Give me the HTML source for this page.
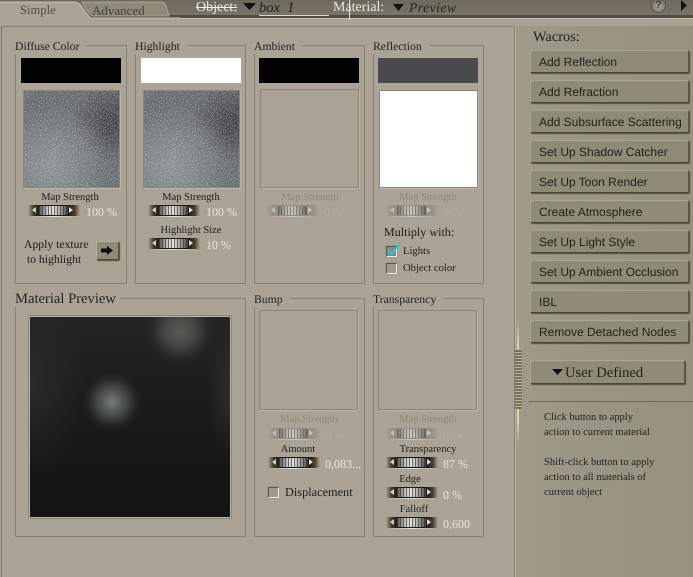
<!DOCTYPE html>
<html><head><meta charset="utf-8">
<style>
html,body{margin:0;padding:0}
body{width:693px;height:577px;overflow:hidden;position:relative;background:#aaa396;font-family:"Liberation Serif",serif;color:#1c1b18;text-rendering:geometricPrecision}
div,span{position:absolute;box-sizing:border-box;white-space:nowrap}
.g{border:1px solid #85806f;border-radius:1px}
.lb{background:#aaa396;padding:0 7px 0 0;font-size:11.7px;line-height:14px;color:#24231f}
.sw{width:100px;height:25px}
.well{border:1px solid #8b8676;box-shadow:1px 1px 0 #bdb7aa}
.c{text-align:center;font-size:10.5px;line-height:12px;color:#1f1e1a}
.dis{color:#8f8a7c}
.v{font-size:12px;line-height:14px;color:#e9e6de}
.vd{color:#b5afa3}
.sl{width:44px;height:14px}
.sl i{position:absolute;display:block}
.sl .bg{left:-4px;top:1px;width:52px;height:11px;background:linear-gradient(90deg,transparent,#4a3f2d 10%,#1c1812 22%,#1c1812 78%,#4a3f2d 90%,transparent)}
.sl .bar{left:7px;top:2px;width:29px;height:9px;background:repeating-linear-gradient(90deg,rgba(40,40,40,.6) 0 1px,transparent 1px 3px),linear-gradient(90deg,#55524b,#c8c8c6 30%,#e0e0de 50%,#a0a09c 75%,#44423c)}
.sl .la{left:0;top:3px;border:3.5px solid transparent;border-right:4px solid #d0d0cb;border-left:0}
.sl .ra{left:37px;top:3px;border:3.5px solid transparent;border-left:4px solid #dcdcd6;border-right:0}
.sl .ln{left:-3px;top:12px;width:50px;height:1px;background:linear-gradient(90deg,transparent,#e6e2d6,transparent)}
.sl.d{opacity:.6}
.sl.d .bg{opacity:.25}
.btn{left:530px;width:159px;height:23px;background:#8f8b78;border:1px solid #aaa695;border-right-color:#5b5748;border-bottom-color:#4a4739;border-radius:2px;box-shadow:1px 1px 1px #4f4c40;font-family:"Liberation Sans",sans-serif;font-size:12px;line-height:23px;padding-left:8px;color:#22211c}
.note{left:544px;font-size:10.5px;line-height:15px;color:#24231e}
.ck{width:11px;height:11px;border:1px solid #efece4;border-top-color:#5a574d;border-left-color:#5a574d;box-shadow:0 0 1px #77725f}
.tex{left:0;top:0;width:96px;height:96px;background:radial-gradient(circle 62px at 28% 78%,#92979c 0,#82878c 40%,rgba(105,110,114,0) 100%),radial-gradient(ellipse 50px 40px at 100% 32%,#3d4042 0,#4a4d50 40%,rgba(95,99,103,0) 100%),#676c70}
</style></head><body>
<svg width="0" height="0" style="position:absolute"><defs>
<filter id="n" x="0" y="0" width="100%" height="100%"><feTurbulence type="fractalNoise" baseFrequency="1.1" numOctaves="2" seed="4"/><feColorMatrix values="0 0 0 0 .85  0 0 0 0 .87  0 0 0 0 .92  3.4 0 0 0 -1.95"/></filter>
<filter id="n2" x="0" y="0" width="100%" height="100%"><feTurbulence type="fractalNoise" baseFrequency=".9" numOctaves="2" seed="9"/><feColorMatrix values="0 0 0 0 .2  0 0 0 0 .21  0 0 0 0 .22  2 0 0 0 -1"/></filter>
</defs></svg>

<!-- right column -->
<div style="left:515px;top:20px;width:178px;height:557px;background:linear-gradient(90deg,#a09a8b,#9b9586 40%,#979180)"></div>
<div style="left:515px;top:19px;width:1px;height:558px;background:#b9b4a7"></div>

<!-- top bar -->
<div style="left:0;top:0;width:693px;height:16px;background:linear-gradient(#6d675c,#7b7568)"></div>
<div style="left:0;top:15px;width:693px;height:3px;background:#4f4b41"></div>
<div style="left:0;top:18px;width:693px;height:1px;background:#c9c4b7"></div>
<div style="left:0;top:19px;width:693px;height:7px;background:#aaa396"></div>

<!-- tabs -->
<svg style="position:absolute;left:0;top:0" width="180" height="22">
<path d="M82 2H161Q165 2 166 6L169 16H92Q86 10 82 2Z" fill="#8f897a" stroke="#a9a496"/>
<path d="M0 20V2H74Q79 2 82 7Q86 14 91 18H180V20Z" fill="#aaa396"/>
<path d="M0 2H74Q79 2 82 7Q86 14 91 18H180" fill="none" stroke="#c9c4b7"/>
</svg>
<div style="left:20px;top:3px;font-size:12.6px;line-height:15px;color:#4d4a41">Simple</div>
<div style="left:92px;top:3px;font-size:13px;line-height:15px;color:#45423a">Advanced</div>

<!-- object/material -->
<div style="left:196px;top:0;font-size:14px;line-height:16px;color:#f2f0ea;text-decoration:line-through">Object:</div>
<svg style="position:absolute;left:243px;top:3px" width="14" height="8"><path d="M0 0H13L6.5 7Z" fill="#111"/></svg>
<div style="left:259px;top:0;font-size:14.5px;line-height:16px;font-style:italic;color:#1e1d19">box&nbsp;&nbsp;1</div>
<div style="left:259px;top:15px;width:70px;height:1px;background:#d8d4c9"></div>
<div style="left:333px;top:0;font-size:14px;line-height:16px;color:#e9e6df">Material:</div>
<div style="left:349px;top:0;width:1px;height:20px;background:#e8e5dd"></div>
<svg style="position:absolute;left:393px;top:4px" width="12" height="8"><path d="M0 0H11L5.5 7Z" fill="#111"/></svg>
<div style="left:409px;top:0;font-size:13.5px;line-height:16px;font-style:italic;color:#25241f;letter-spacing:.55px">Preview</div>
<div style="left:651px;top:-2px;width:15px;height:15px;border-radius:50%;background:radial-gradient(circle at 50% 60%,#a8a499,#6a665b);border:1px solid #55514a;color:#3b3932;font:bold 11px/13px 'Liberation Sans',sans-serif;text-align:center">?</div>
<svg style="position:absolute;left:681px;top:0" width="8" height="12"><path d="M0 0L6 5.5L0 11Z" fill="#111"/></svg>

<!-- main frame -->
<div style="left:1px;top:26px;width:514px;height:551px;border-left:1px solid #797466;border-top:1px solid #857f70;border-right:1px solid #857f70"></div>

<!-- Diffuse -->
<div class="g" style="left:15px;top:45px;width:112px;height:239px"></div>
<div class="lb" style="left:15px;top:40px">Diffuse Color</div>
<div class="sw" style="left:21px;top:58px;background:#020202"></div>
<div class="well" style="left:23px;top:90px;width:97px;height:98px;overflow:hidden">
 <div class="tex"></div>
 <svg style="position:absolute;left:0;top:0" width="96" height="96"><rect width="96" height="96" filter="url(#n2)"/><rect width="96" height="96" filter="url(#n)"/></svg>
</div>
<div class="c" style="left:20px;top:192px;width:100px">Map Strength</div>
<div class="sl" style="left:32px;top:204px"><i class="bg"></i><i class="bar"></i><i class="la"></i><i class="ra"></i><i class="ln"></i></div>
<div class="v" style="left:86px;top:205px">100 %</div>
<div style="left:24px;top:237px;font-size:11.7px;line-height:15px">Apply texture<br>&nbsp;to highlight</div>
<div style="left:96px;top:241px;width:23px;height:19px;background:#8f8b78;border:1px solid #b5b1a1;border-right-color:#55523f;border-bottom-color:#4a4739;border-radius:2px;box-shadow:1px 1px 1px #4f4c40"></div>
<svg style="position:absolute;left:100px;top:245px" width="14" height="11"><path d="M1 3.5H7V1L13 5.5L7 10V7.5H1Z" fill="#0c0c0c"/></svg>

<!-- Highlight -->
<div class="g" style="left:135px;top:45px;width:111px;height:239px"></div>
<div class="lb" style="left:135px;top:40px">Highlight</div>
<div class="sw" style="left:141px;top:58px;background:#fff"></div>
<div class="well" style="left:143px;top:90px;width:97px;height:98px;overflow:hidden">
 <div class="tex"></div>
 <svg style="position:absolute;left:0;top:0" width="96" height="96"><rect width="96" height="96" filter="url(#n2)"/><rect width="96" height="96" filter="url(#n)"/></svg>
</div>
<div class="c" style="left:141px;top:192px;width:100px">Map Strength</div>
<div class="sl" style="left:152px;top:204px"><i class="bg"></i><i class="bar"></i><i class="la"></i><i class="ra"></i><i class="ln"></i></div>
<div class="v" style="left:206px;top:205px">100 %</div>
<div class="c" style="left:141px;top:225px;width:100px">Highlight Size</div>
<div class="sl" style="left:152px;top:237px"><i class="bg"></i><i class="bar"></i><i class="la"></i><i class="ra"></i><i class="ln"></i></div>
<div class="v" style="left:206px;top:238px">10 %</div>

<!-- Ambient -->
<div class="g" style="left:254px;top:45px;width:111px;height:239px"></div>
<div class="lb" style="left:254px;top:40px">Ambient</div>
<div class="sw" style="left:259px;top:58px;background:#020202"></div>
<div class="well" style="left:260px;top:89px;width:99px;height:99px"></div>
<div class="c dis" style="left:260px;top:192px;width:100px">Map Strength</div>
<div class="sl d" style="left:271px;top:204px"><i class="bg"></i><i class="bar"></i><i class="la"></i><i class="ra"></i><i class="ln"></i></div>
<div class="v vd" style="left:324px;top:205px">0 %</div>

<!-- Reflection -->
<div class="g" style="left:373px;top:45px;width:111px;height:239px"></div>
<div class="lb" style="left:373px;top:40px">Reflection</div>
<div class="sw" style="left:378px;top:58px;background:#4a4a4c"></div>
<div class="well" style="left:379px;top:90px;width:99px;height:98px;background:#fff"></div>
<div class="c dis" style="left:378px;top:192px;width:100px">Map Strength</div>
<div class="sl d" style="left:390px;top:204px"><i class="bg"></i><i class="bar"></i><i class="la"></i><i class="ra"></i><i class="ln"></i></div>
<div class="v vd" style="left:443px;top:205px">0 %</div>
<div style="left:384px;top:225px;font-size:12.1px;line-height:14px">Multiply with:</div>
<div class="ck" style="left:386px;top:246px;background:#8d8777"></div>
<svg style="position:absolute;left:386px;top:242px" width="16" height="16"><path d="M2 8L6 12L14 1" fill="none" stroke="#18cfe6" stroke-width="2"/></svg>
<div class="c" style="left:403px;top:246px;font-size:10.6px">Lights</div>
<div class="ck" style="left:386px;top:263px;background:#a09a8b"></div>
<div class="c" style="left:403px;top:263px;font-size:10.6px">Object color</div>

<!-- Material Preview -->
<div class="g" style="left:15px;top:298px;width:231px;height:239px"></div>
<div class="lb" style="left:15px;top:291px;font-size:14.6px;line-height:16px;padding-right:4px">Material Preview</div>
<div style="left:28px;top:315px;width:204px;height:204px;border:1px solid #8b8676;box-shadow:inset 0 0 0 1px #b9b3a5"></div>
<div style="left:30px;top:317px;width:200px;height:200px;background:
 radial-gradient(circle 10px at 82px 85px,rgba(165,172,168,.25) 0,rgba(165,172,168,0) 100%),
 radial-gradient(circle 30px at 82px 85px,rgba(125,134,130,.75) 0,rgba(112,120,116,.6) 40%,rgba(78,83,80,.22) 78%,rgba(40,42,40,0) 100%),
 radial-gradient(circle 36px at 150px 14px,rgba(108,108,102,.75) 0,rgba(98,98,92,.6) 38%,rgba(66,66,62,.2) 78%,rgba(40,40,38,0) 100%),
 radial-gradient(ellipse 60px 90px at 0 70px,rgba(52,52,48,.6) 0,rgba(52,52,48,0) 100%),
 radial-gradient(ellipse 24px 70px at 200px 75px,rgba(58,58,54,.6) 0,rgba(58,58,54,0) 100%),
 linear-gradient(#242523,#181918 50%,#131413)"></div>

<!-- Bump -->
<div class="g" style="left:254px;top:298px;width:111px;height:239px"></div>
<div class="lb" style="left:254px;top:293px">Bump</div>
<div class="well" style="left:259px;top:310px;width:99px;height:100px"></div>
<div class="c dis" style="left:259px;top:414px;width:100px">Map Strength</div>
<div class="sl d" style="left:272px;top:427px"><i class="bg"></i><i class="bar"></i><i class="la"></i><i class="ra"></i><i class="ln"></i></div>
<div class="v vd" style="left:325px;top:428px">0 %</div>
<div class="c" style="left:248px;top:444px;width:100px">Amount</div>
<div class="sl" style="left:272px;top:456px"><i class="bg"></i><i class="bar"></i><i class="la"></i><i class="ra"></i><i class="ln"></i></div>
<div class="v" style="left:325px;top:457px">0,083...</div>
<div class="ck" style="left:268px;top:487px;background:#a09a8b"></div>
<div style="left:285px;top:485px;font-size:12.3px;line-height:14px">Displacement</div>

<!-- Transparency -->
<div class="g" style="left:373px;top:298px;width:111px;height:239px"></div>
<div class="lb" style="left:373px;top:293px">Transparency</div>
<div class="well" style="left:378px;top:310px;width:99px;height:100px"></div>
<div class="c dis" style="left:378px;top:414px;width:100px">Map Strength</div>
<div class="sl d" style="left:390px;top:427px"><i class="bg"></i><i class="bar"></i><i class="la"></i><i class="ra"></i><i class="ln"></i></div>
<div class="v vd" style="left:443px;top:427px">0 %</div>
<div class="c" style="left:378px;top:444px;width:100px">Transparency</div>
<div class="sl" style="left:390px;top:456px"><i class="bg"></i><i class="bar"></i><i class="la"></i><i class="ra"></i><i class="ln"></i></div>
<div class="v" style="left:443px;top:457px">87 %</div>
<div class="c" style="left:390px;top:474px;width:40px">Edge</div>
<div class="sl" style="left:390px;top:486px"><i class="bg"></i><i class="bar"></i><i class="la"></i><i class="ra"></i><i class="ln"></i></div>
<div class="v" style="left:443px;top:488px">0 %</div>
<div class="c" style="left:389px;top:504px;width:50px">Falloff</div>
<div class="sl" style="left:390px;top:516px"><i class="bg"></i><i class="bar"></i><i class="la"></i><i class="ra"></i><i class="ln"></i></div>
<div class="v" style="left:443px;top:517px">0,600</div>

<!-- Splitter -->
<div style="left:517px;top:320px;width:2px;height:125px;background:linear-gradient(transparent,#d8d4c8 20%,#d8d4c8 80%,transparent)"></div>
<div style="left:515px;top:349px;width:7px;height:60px;background:repeating-linear-gradient(#bdb79f 0 1px,#77725a 1px 3px);border-radius:2px"></div>

<!-- Wacros -->
<div style="left:533px;top:29px;font-size:14.4px;line-height:17px;color:#23221d">Wacros:</div>
<div class="btn" style="top:50px">Add Reflection</div>
<div class="btn" style="top:80px">Add Refraction</div>
<div class="btn" style="top:110px">Add Subsurface Scattering</div>
<div class="btn" style="top:140px">Set Up Shadow Catcher</div>
<div class="btn" style="top:170px">Set Up Toon Render</div>
<div class="btn" style="top:200px">Create Atmosphere</div>
<div class="btn" style="top:230px">Set Up Light Style</div>
<div class="btn" style="top:260px">Set Up Ambient Occlusion</div>
<div class="btn" style="top:290px">IBL</div>
<div class="btn" style="top:320px">Remove Detached Nodes</div>
<div class="btn" style="top:360px;width:155px;height:24px;line-height:24px;font-family:'Liberation Serif',serif;font-size:14.6px;padding-left:34px">User Defined</div>
<svg style="position:absolute;left:552px;top:369px" width="12" height="7"><path d="M0 0H11L5.5 6Z" fill="#111"/></svg>
<div style="left:529px;top:401px;width:164px;height:1px;background:#6b6657"></div>
<div class="note" style="top:410px">Click button to apply<br>action to current material</div>
<div class="note" style="top:455px">Shift-click button to apply<br>action to all materials of<br>current object</div>
</body></html>
